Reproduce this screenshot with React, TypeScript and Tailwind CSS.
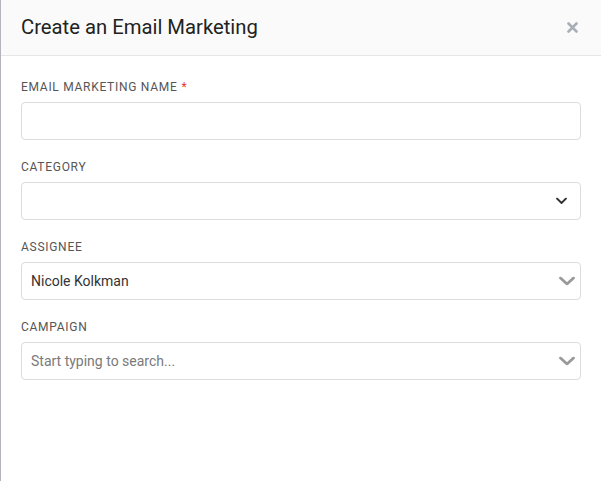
const font = { fontFamily: "Roboto, 'Noto Sans', sans-serif" };

function Chevron({ dark }: { dark?: boolean }) {
  if (dark) {
    return (
      <svg width="11" height="7" viewBox="0 0 11 7" className="absolute right-[13px] top-1/2 -translate-y-1/2">
        <path d="M1 1l4.5 4.5L10 1" fill="none" stroke="#333" strokeWidth="1.8" strokeLinecap="round" strokeLinejoin="round" />
      </svg>
    );
  }
  return (
    <svg width="16" height="9" viewBox="0 0 16 9" className="absolute right-[5px] top-1/2 -translate-y-1/2">
      <path d="M1.5 1.5l6.5 6 6.5-6" fill="none" stroke="#9a9a9a" strokeWidth="2.8" strokeLinecap="round" strokeLinejoin="round" />
    </svg>
  );
}

function Field({
  label,
  required,
  value,
  placeholder,
  chevron,
}: {
  label: string;
  required?: boolean;
  value?: string;
  placeholder?: string;
  chevron?: "dark" | "grey";
}) {
  return (
    <div className="flex flex-col">
      <label className="text-[12px] leading-4 uppercase tracking-[0.06em] text-[#555] mb-[7px]">
        {label}
        {required && <span className="text-[#e53935] ml-1">*</span>}
      </label>
      <div className="relative h-[38px] rounded-[4px] border border-[#dcdcdc] bg-white flex items-center pl-[9px]">
        {value && <span className="text-[14px] text-[#333]">{value}</span>}
        {placeholder && <span className="text-[14px] text-[#7a7a7a]">{placeholder}</span>}
        {chevron && <Chevron dark={chevron === "dark"} />}
      </div>
    </div>
  );
}

export default function App() {
  return (
    <div className="w-[601px] h-[481px] bg-white border-l border-[#b4b4bc] flex flex-col" style={font}>
      <div className="h-[56px] bg-[#fafafa] border-b border-[#e6e6e6] flex items-center justify-between px-5 shrink-0">
        <h1 className="text-[20.25px] text-[#222]">Create an Email Marketing</h1>
        <svg width="11" height="11" viewBox="0 0 11 11" className="mr-[3px]">
          <path d="M1.5 1.5l8 8M9.5 1.5l-8 8" stroke="#a9afb8" strokeWidth="2.6" strokeLinecap="round" />
        </svg>
      </div>
      <div className="flex flex-col gap-[19px] pt-[23px] pl-5 pr-5">
        <Field label="Email Marketing Name" required />
        <Field label="Category" chevron="dark" />
        <Field label="Assignee" value="Nicole Kolkman" chevron="grey" />
        <Field label="Campaign" placeholder="Start typing to search..." chevron="grey" />
      </div>
    </div>
  );
}
